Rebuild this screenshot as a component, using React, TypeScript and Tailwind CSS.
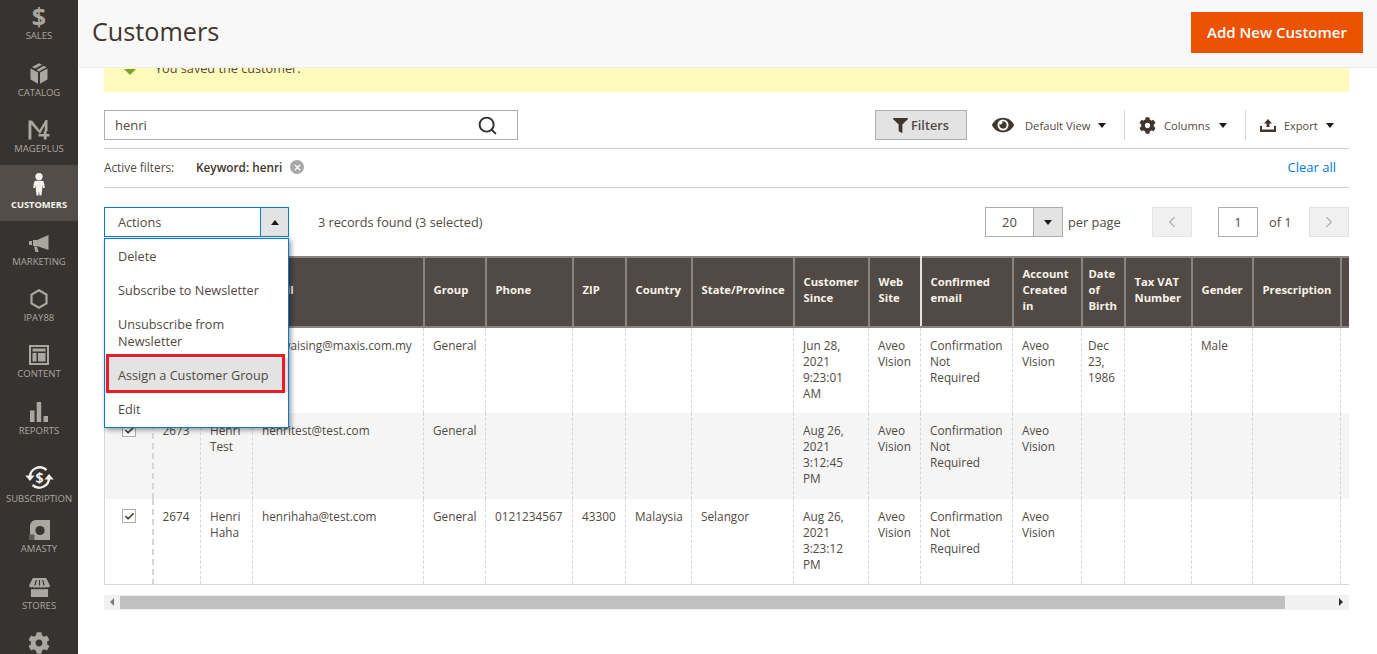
import type React from "react"
import { Search, ChevronLeft, ChevronRight, Check, X } from "lucide-react"
import { FaCog, FaEye, FaFilter } from "react-icons/fa"

const iconClass = "fill-current"

const BoxIcon = () => (
  <svg width="18" height="21" viewBox="0 0 18 21" className={iconClass}>
    <path d="M9 0.3 L12 1.8 L5 5.6 L2 4 Z M13.8 2.8 L16.6 4.2 L9 8.4 L6.4 7 Z" />
    <path d="M0.5 5.4 L8 9.6 V20.8 L0.5 16.4 Z M17.5 5.4 V16.4 L10 20.8 V9.6 Z" />
  </svg>
)

const MageIcon = () => (
  <svg width="22" height="20" viewBox="0 0 22 20" className={iconClass}>
    <path d="M0.5 0.5 H4 L11.5 10 L17.5 0 H19.5 V11 H16.8 V5.5 L12 14 L3.4 4.6 V19.5 H0.5 Z" />
    <path d="M15.8 11 H18.6 V14 H21.5 V16.6 H18.6 V19.5 H15.8 V16.6 H10.5 V14 H15.8 Z" />
  </svg>
)

const PersonIcon = () => (
  <svg width="12" height="23" viewBox="0 0 12 23" className={iconClass}>
    <circle cx="6" cy="3.6" r="3.6" />
    <path d="M3 7.8 H9 C10.4 7.8 11 9 11.2 10.5 L11.8 15 H10 L9.3 12 V16 L8.4 22.5 H6.6 L6 18.5 L5.4 22.5 H3.6 L2.7 16 V12 L2 15 H0.2 L0.8 10.5 C1 9 1.6 7.8 3 7.8 Z" />
  </svg>
)

const MegaphoneIcon = () => (
  <svg width="20" height="18" viewBox="0 0 20 18" className={iconClass}>
    <path d="M19.5 0 V15 L8 11 H4 V5 H8 Z M0 6 H3 V10 H0 Z M5 11.5 H8 L9.5 17 H6.5 Z" />
  </svg>
)

const HexIcon = () => (
  <svg width="18" height="20" viewBox="0 0 18 20" fill="none" stroke="currentColor" strokeWidth="2.2">
    <path d="M9 1.3 L16.5 5.6 V14.4 L9 18.7 L1.5 14.4 V5.6 Z" />
  </svg>
)

const ContentIcon = () => (
  <svg width="20" height="20" viewBox="0 0 20 20" className={iconClass}>
    <path fillRule="evenodd" d="M0 0 H20 V20 H0 Z M2 2 V18 H18 V2 Z M3.5 3.5 H16.5 V6.5 H3.5 Z M3.5 8 H7.5 V16.5 H3.5 Z M9 8 H16.5 V16.5 H9 Z" />
  </svg>
)

const ReportsIcon = () => (
  <svg width="18" height="20" viewBox="0 0 18 20" className={iconClass}>
    <path d="M0 8.5 H4.5 V20 H0 Z M6.7 0 H11.2 V20 H6.7 Z M13.5 14 H18 V20 H13.5 Z" />
  </svg>
)

const SubscriptionIcon = () => (
  <svg width="29" height="25" viewBox="0 0 29 25" fill="none" stroke="#f2f0ec" strokeWidth="2.4">
    <path d="M5 12.5 A9.8 9.8 0 0 1 21.5 5" />
    <path d="M24 12.5 A9.8 9.8 0 0 1 7.5 20" />
    <path d="M0.3 10.5 L5 16 L9.5 10.5 Z" fill="#f2f0ec" stroke="none" />
    <path d="M19.5 14.5 L24 9 L28.7 14.5 Z" fill="#f2f0ec" stroke="none" />
    <text x="14.5" y="17.5" textAnchor="middle" fontSize="14" fontWeight="700" fill="#f2f0ec" stroke="none" fontFamily="'Open Sans', sans-serif">$</text>
  </svg>
)

const AmastyIcon = () => (
  <svg width="21" height="20" viewBox="0 0 21 20">
    <path d="M7 0 H21 V20 H6 C3 20 1 17.5 1 14 V6 C1 3 3.5 0 7 0 Z" fill="currentColor" />
    <circle cx="11" cy="10.5" r="4.6" fill="#373330" />
    <rect x="0" y="14.5" width="5.5" height="5.5" fill="#5e5a56" />
  </svg>
)

const StoreIcon = () => (
  <svg width="21" height="19" viewBox="0 0 22 20" className={iconClass}>
    <path fillRule="evenodd" d="M4 0 H18 L22 8 C22 10 19.5 10.5 18 9.5 C16.5 10.5 15 10.5 14.5 9.5 C13 10.5 12 10.5 11 9.5 C10 10.5 9 10.5 7.5 9.5 C7 10.5 5.5 10.5 4 9.5 C2.5 10.5 0 10 0 8 Z M7 2 L5.5 8 H6.8 L8.2 2 Z M10.4 2 V8 H11.6 V2 Z M13.8 2 L15.2 8 H16.5 L15 2 Z" />
    <path d="M2 11.5 C3 12 4.5 12 5.5 11.5 C7 12 9.5 12 11 11.5 C12.5 12 15 12 16.5 11.5 C17.5 12 19 12 20 11.5 V20 H2 Z" />
  </svg>
)

const navItems: { label: string; height: string; icon: React.ReactNode; active?: boolean }[] = [
  { label: "Sales", height: "h-[56.5px]", icon: <span className="text-[25px] font-bold leading-[22px]">$</span> },
  { label: "Catalog", height: "h-[56.5px]", icon: <BoxIcon /> },
  { label: "MagePlus", height: "h-[56.5px]", icon: <MageIcon /> },
  { label: "Customers", height: "h-[56px]", icon: <PersonIcon />, active: true },
  { label: "Marketing", height: "h-[56.5px]", icon: <MegaphoneIcon /> },
  { label: "iPay88", height: "h-[56px]", icon: <HexIcon /> },
  { label: "Content", height: "h-[56.5px]", icon: <ContentIcon /> },
  { label: "Reports", height: "h-[57px]", icon: <ReportsIcon /> },
  { label: "Subscription", height: "h-[67.5px]", icon: <SubscriptionIcon /> },
  { label: "Amasty", height: "h-[50.5px]", icon: <AmastyIcon /> },
  { label: "Stores", height: "h-[57px]", icon: <StoreIcon /> },
  { label: "System", height: "h-[56.5px]", icon: <FaCog size={22} /> },
]

const columns = [
  { label: "", width: "w-[48px]" },
  { label: "ID", width: "w-[48px]" },
  { label: "Name", width: "w-[52px]" },
  { label: "Email", width: "w-[171px]" },
  { label: "Group", width: "w-[62px]" },
  { label: "Phone", width: "w-[87px]" },
  { label: "ZIP", width: "w-[53px]" },
  { label: "Country", width: "w-[66px]" },
  { label: "State/Province", width: "w-[102px]" },
  { label: "Customer Since", width: "w-[75px]" },
  { label: "Web Site", width: "w-[52px]" },
  { label: "Confirmed email", width: "w-[92px]" },
  { label: "Account Created in", width: "w-[69px]" },
  { label: "Date of Birth", width: "w-[43px]" },
  { label: "Tax VAT Number", width: "w-[67px]" },
  { label: "Gender", width: "w-[61px]" },
  { label: "Prescription", width: "w-[88px]" },
  { label: "", width: "w-[30px]" },
]

const rows = [
  ["2672", "Henri Wai", "lee.waising@maxis.com.my", "General", "", "", "", "", "Jun 28, 2021 9:23:01 AM", "Aveo Vision", "Confirmation Not Required", "Aveo Vision", "Dec 23, 1986", "", "Male", "", ""],
  ["2673", "Henri Test", "henritest@test.com", "General", "", "", "", "", "Aug 26, 2021 3:12:45 PM", "Aveo Vision", "Confirmation Not Required", "Aveo Vision", "", "", "", "", ""],
  ["2674", "Henri Haha", "henrihaha@test.com", "General", "0121234567", "43300", "Malaysia", "Selangor", "Aug 26, 2021 3:23:12 PM", "Aveo Vision", "Confirmation Not Required", "Aveo Vision", "", "", "", "", ""],
]

const actions = ["Delete", "Subscribe to Newsletter", "Unsubscribe from Newsletter", "Assign a Customer Group", "Edit"]

const Caret = ({ up }: { up?: boolean }) => (
  <span
    className={`inline-block w-0 h-0 border-x-[4px] border-x-transparent ${up ? "border-b-[5px] border-b-[#1f1a17]" : "border-t-[5px] border-t-[#1f1a17]"}`}
  />
)

export default function App() {
  return (
    <div className="flex h-[654px] w-[1377px] overflow-hidden bg-white text-[12.7px] leading-[16px] text-[#514943] font-['Open_Sans',sans-serif]">
      <aside className="w-[78px] shrink-0 bg-[#373330] overflow-hidden">
        <div className="-mt-[4.5px]">
          {navItems.map((item) => (
            <div
              key={item.label}
              className={`flex flex-col items-center justify-end pb-[10px] ${item.height} ${item.active ? "bg-[#524d49] text-[#f7f3eb]" : "text-[#aaa6a0]"}`}
            >
              <div className="mb-[3px] flex items-center justify-center">{item.icon}</div>
              <span className={`leading-[12px] uppercase ${item.active ? "text-[9.3px] font-bold" : "text-[9.5px]"}`}>{item.label}</span>
            </div>
          ))}
        </div>
      </aside>

      <main className="flex-1 min-w-0">
        <header className="flex h-[68px] items-center justify-between bg-[#f8f8f8] border-b border-[#eeeeee] pl-[14px] pr-[14px]">
          <h1 className="text-[25.2px] leading-[32px] text-[#41362f] -mt-[6px]">Customers</h1>
          <button className="h-[41px] w-[172px] bg-[#eb5202] text-[15px] font-semibold text-white -mt-[3px]">Add New Customer</button>
        </header>

        <div className="ml-[26px] mr-[28px]">
          <div className="flex h-[24px] items-end overflow-hidden bg-[#fffbbb] pl-[20px] pb-[16px]">
            <span className="mr-[19px] inline-block h-0 w-0 border-x-[6px] border-x-transparent border-t-[6px] border-t-[#79a22e] -translate-y-[1px]" />
            <span className="leading-[16px] whitespace-nowrap text-[#514943]">You saved the customer.</span>
          </div>

          <div className="mt-[18px] flex h-[30px] items-center justify-between pr-[1px]">
            <div className="flex h-[30px] w-[414px] items-center justify-between border border-[#adadad] pl-[10px] pr-[19px] bg-white">
              <span className="text-[13px]">henri</span>
              <Search size={21} strokeWidth={2.2} className="text-[#303030]" />
            </div>
            <div className="flex items-center">
              <button className="flex h-[30px] w-[92px] items-center justify-center gap-[3px] border border-[#adadad] bg-[#e3e3e3] font-semibold">
                <FaFilter size={15} className="text-[#41362f]" />
                Filters
              </button>
              <div className="flex h-[30px] w-[158px] items-center border-r border-[#d6d6d6] pl-[25px]">
                <FaEye size={22} className="text-[#41362f] mr-[11px]" />
                <span className="text-[11.2px] mr-[8px] pt-[1px]">Default View</span>
                <Caret />
              </div>
              <div className="flex h-[30px] w-[121px] items-center border-r border-[#d6d6d6] pl-[14px]">
                <FaCog size={17} className="text-[#41362f] mr-[8px]" />
                <span className="text-[11.2px] mr-[9px] pt-[1px]">Columns</span>
                <Caret />
              </div>
              <div className="flex h-[30px] w-[102px] items-center pl-[14px]">
                <svg width="16" height="14" viewBox="0 0 16 14" className="mr-[8px] fill-[#41362f]">
                  <path d="M8 1 L12 5.5 H9.5 V9 H6.5 V5.5 H4 Z M0 8 H2 V11.5 H14 V8 H16 V14 H0 Z" />
                </svg>
                <span className="text-[11px] mr-[8px] pt-[1px]">Export</span>
                <Caret />
              </div>
            </div>
          </div>

          <div className="mt-[8px] flex h-[40px] items-center justify-between border-y border-[#cccccc] pr-[13px] pb-[2px]">
            <div className="flex items-center">
              <span className="text-[11.8px] w-[92px]">Active filters:</span>
              <span className="text-[11.8px] font-semibold text-[#41362f]">Keyword: henri</span>
              <span className="ml-[8px] flex h-[14px] w-[14px] items-center justify-center rounded-full bg-[#a8a8a8]">
                <X size={9} strokeWidth={3.5} className="text-white" />
              </span>
            </div>
            <span className="text-[13px] text-[#007bdb] font-medium">Clear all</span>
          </div>

          <div className="mt-[19px] flex h-[30px] items-center justify-between">
            <div className="flex items-center">
              <div className="relative z-10">
                <div className="flex h-[30px] w-[185px] border border-[#007bdb] bg-white">
                  <span className="flex-1 pl-[13px] leading-[28px]">Actions</span>
                  <span className="flex w-[28px] items-center justify-center border-l border-[#007bdb] bg-[#e3e3e3]">
                    <Caret up />
                  </span>
                </div>
                <ul className="absolute left-0 top-[31px] w-[185px] h-[190px] border border-[#007bdb] bg-white shadow-[2px_2px_5px_rgba(0,0,0,0.4)]">
                  {actions.map((action) => {
                    const isSelected = action === "Assign a Customer Group"
                    return (
                      <li
                        key={action}
                        className={`relative px-[13px] py-[8.5px] leading-[17px] ${isSelected ? "bg-[#e3e3e3]" : ""}`}
                      >
                        {action}
                        {isSelected && (
                          <span className="absolute left-[1px] right-[3px] -top-[4px] -bottom-[1px] border-[3px] border-[#ed1c24]" />
                        )}
                      </li>
                    )
                  })}
                </ul>
              </div>
              <span className="ml-[29px]">3 records found (3 selected)</span>
            </div>

            <div className="flex items-center">
              <div className="flex h-[30px] w-[78px] border border-[#adadad]">
                <span className="flex-1 text-center leading-[28px] text-[13px]">20</span>
                <span className="flex w-[29px] items-center justify-center border-l border-[#adadad] bg-[#e3e3e3]">
                  <Caret />
                </span>
              </div>
              <span className="ml-[5px] w-[84px] text-[12.8px]">per page</span>
              <span className="flex h-[30px] w-[40px] items-center justify-center border border-[#e3e3e3] bg-[#f0f0f0]">
                <ChevronLeft size={18} strokeWidth={1.5} className="text-[#adadad]" />
              </span>
              <span className="ml-[26px] h-[30px] w-[40px] border border-[#adadad] text-center leading-[28px] text-[13px]">1</span>
              <span className="ml-[11px] w-[40px] text-[12.8px]">of 1</span>
              <span className="flex h-[30px] w-[40px] items-center justify-center border border-[#e3e3e3] bg-[#f0f0f0]">
                <ChevronRight size={18} strokeWidth={1.5} className="text-[#adadad]" />
              </span>
            </div>
          </div>

          <div className="mt-[19px] overflow-hidden">
            <table className="table-fixed border-collapse w-[1263px]">
              <colgroup>
                {columns.map((col, i) => (
                  <col key={i} className={col.width} />
                ))}
              </colgroup>
              <thead>
                <tr className="h-[70px] bg-[#514943] text-[#f7f3eb]">
                  {columns.map((col, i) => (
                    <th
                      key={i}
                      className={`border-y-2 border-y-[#8a837f] border-r-2 pr-[2px] pb-[4px] text-left font-bold text-[11.3px] leading-[16px] ${i === 13 ? "pl-[6px]" : "pl-[9px]"} ${i === 10 ? "border-r-[#e6e3df]" : "border-r-[#8a837f]"}`}
                    >
                      {col.label}
                    </th>
                  ))}
                </tr>
              </thead>
              <tbody className="border-b border-[#d6d6d6] text-[11.8px]">
                {rows.map((row, r) => (
                  <tr key={row[0]} className={`align-top ${r === 2 ? "h-[85px]" : "h-[86px]"} ${r === 1 ? "bg-[#f5f5f5]" : "bg-white"}`}>
                    <td className="border-l border-[#d6d6d6] border-r-2 border-r-[#d6d6d6] border-dashed pt-[10px] [border-left-style:solid]">
                      <span className="ml-[17px] flex h-[14px] w-[14px] items-center justify-center border border-[#adadad] bg-white">
                        <Check size={11} strokeWidth={3.5} className="text-[#41362f]" />
                      </span>
                    </td>
                    {row.map((cell, c) => (
                      <td key={c} className={`border-r border-dashed border-[#d6d6d6] pr-[11px] pt-[9px] pb-[8px] ${c === 12 ? "pl-[6px]" : "pl-[9px]"}`}>
                        {cell}
                      </td>
                    ))}
                  </tr>
                ))}
              </tbody>
            </table>
          </div>

          <div className="mt-[10px] flex h-[15px] items-center bg-[#f1f1f1]">
            <span className="flex w-[16px] justify-center">
              <span className="h-0 w-0 border-y-[4px] border-y-transparent border-r-[4px] border-r-[#7a7a7a]" />
            </span>
            <span className="h-[13px] w-[1165px] bg-[#c0c0c0]" />
            <span className="ml-auto flex w-[16px] justify-center">
              <span className="h-0 w-0 border-y-[4px] border-y-transparent border-l-[4px] border-l-[#303030]" />
            </span>
          </div>
        </div>
      </main>
    </div>
  )
}
